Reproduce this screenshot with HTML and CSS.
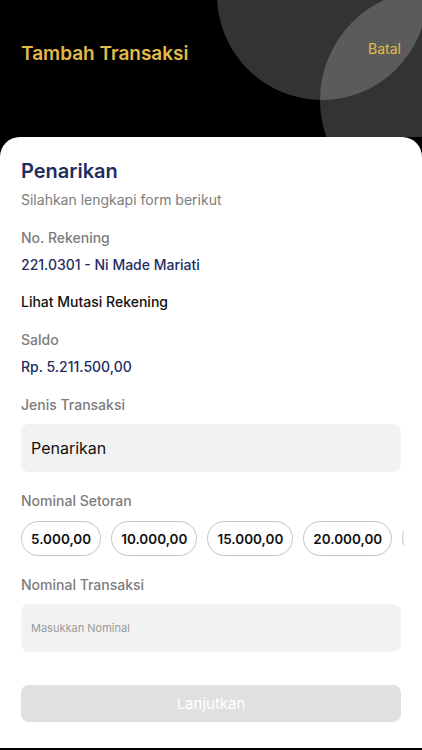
FILE: index.html
```html
<!DOCTYPE html>
<html lang="id">
<head>
    <meta charset="UTF-8">
    <meta name="viewport" content="width=device-width, initial-scale=1.0">
    <title>Tambah Transaksi</title>
    <link rel="stylesheet" href="styles.css">
</head>
<body>
    <div class="header">
        <div class="circle circle-one"></div>
        <div class="circle circle-two"></div>
        <h1 class="header-title">Tambah Transaksi</h1>
        <a class="cancel-link">Batal</a>
    </div>

    <div class="card">
        <h2 class="card-title">Penarikan</h2>
        <p class="card-subtitle">Silahkan lengkapi form berikut</p>

        <p class="label">No. Rekening</p>
        <p class="value">221.0301 - Ni Made Mariati</p>

        <p class="link">Lihat Mutasi Rekening</p>

        <p class="label">Saldo</p>
        <p class="value">Rp. 5.211.500,00</p>

        <p class="label">Jenis Transaksi</p>
        <div class="field field-select">Penarikan</div>

        <p class="label label-gap">Nominal Setoran</p>
        <div class="chips">
            <button class="chip">5.000,00</button>
            <button class="chip">10.000,00</button>
            <button class="chip">15.000,00</button>
            <button class="chip">20.000,00</button>
            <button class="chip">25.000,00</button>
        </div>

        <p class="label label-gap">Nominal Transaksi</p>
        <input class="field field-input" type="text" placeholder="Masukkan Nominal">

        <button class="submit-btn" disabled>Lanjutkan</button>
    </div>
</body>
</html>
```

FILE: styles.css
```css
body {
    margin: 0;
    background-color: #000;
    font-family: Inter, Roboto, "Noto Sans", Arial, sans-serif;
}
.header {
    position: relative;
    height: 137px;
    overflow: hidden;
    background-color: #000;
}
.circle {
    position: absolute;
    border-radius: 50%;
    background-color: rgba(255, 255, 255, 0.2);
}
.circle-one {
    left: 217px;
    top: -110px;
    width: 210px;
    height: 210px;
}
.circle-two {
    left: 320px;
    top: -10px;
    width: 220px;
    height: 220px;
}
.header-title {
    position: relative;
    margin: 0;
    padding: 41px 0 0 21px;
    font-size: 19px;
    font-weight: 600;
    line-height: 26px;
    color: #e2ba4a;
}
.cancel-link {
    position: absolute;
    top: 40px;
    right: 21px;
    font-size: 14px;
    line-height: 18px;
    color: #e2ba4a;
}
.card {
    background-color: #fff;
    border-radius: 20px 20px 0 0;
    padding: 21px 21px 26px;
    overflow: hidden;
}
.card p {
    margin: 0;
    font-size: 14px;
    line-height: 20px;
}
.card-title {
    margin: 0;
    font-size: 20px;
    font-weight: 600;
    line-height: 26px;
    color: #1f2d62;
}
.card .card-subtitle {
    margin-top: 6px;
    color: #7c7c7c;
}
.card .label {
    margin-top: 18px;
    color: #7c7c7c;
    font-weight: 500;
}
.card .label-gap {
    margin-top: 19px;
}
.card .value {
    margin-top: 7px;
    color: #1f2d62;
    font-weight: 500;
}
.card .link {
    margin-top: 17px;
    color: #111;
    font-weight: 500;
}
.field {
    display: block;
    box-sizing: border-box;
    width: 100%;
    height: 48px;
    margin-top: 9px;
    padding: 0 10px;
    border: none;
    border-radius: 8px;
    background-color: #f2f2f2;
    font-family: inherit;
}
.field-select {
    font-size: 16px;
    line-height: 48px;
    color: #111;
}
.field-input {
    font-size: 11px;
    outline: none;
}
.field-input::placeholder {
    color: #9a9a9a;
}
.chips {
    display: flex;
    gap: 10px;
    margin: 10px -3px 0 0;
    overflow: hidden;
}
.chip {
    flex-shrink: 0;
    height: 35px;
    padding: 0 9px;
    border: 1px solid #c4c4c4;
    border-radius: 18px;
    background-color: #fff;
    font-family: inherit;
    font-size: 13.5px;
    font-weight: 600;
    color: #111;
}
.submit-btn {
    display: block;
    width: 100%;
    height: 37px;
    margin-top: 33px;
    border: none;
    border-radius: 8px;
    background-color: #e0e0e0;
    font-family: inherit;
    font-size: 15px;
    color: #fff;
}
```
